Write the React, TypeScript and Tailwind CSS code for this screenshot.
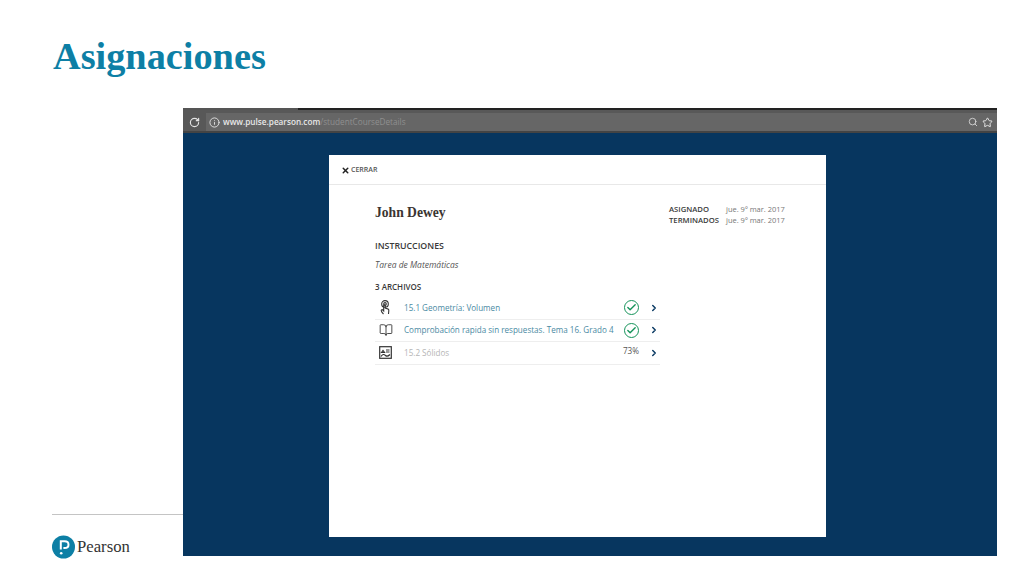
import { ChevronRight, Check, X, RotateCw, Info, Search, Star, BookOpen } from "lucide-react";

const openSans = "font-['Open_Sans',sans-serif]";

function StatusCheck() {
  return (
    <span className="flex h-[15px] w-[15px] items-center justify-center rounded-full border-[1.5px] border-[#15935a]">
      <Check size={11} strokeWidth={3} className="text-[#15935a]" />
    </span>
  );
}

function TouchIcon() {
  return (
    <svg width="12" height="15" viewBox="0 0 12 15" fill="none" stroke="#333" strokeWidth="1.1">
      <circle cx="6" cy="3.900" r="3.300" />
      <circle cx="6" cy="3.900" r="1.300" />
      <path d="M4.500 14c-1-1-2.300-2.400-2.300-3.600 0-.8 1-1 1.600-.4l.9.900V5.600c0-1 1.600-1 1.600 0v2.600l2.400.7c.8.2 1.200.8 1.100 1.600L9.500 14" />
    </svg>
  );
}

function ImageListIcon() {
  return (
    <svg width="13" height="13" viewBox="0 0 13 13" fill="none" stroke="#333" strokeWidth="1.2">
      <rect x="0.700" y="0.700" width="11.600" height="11.600" />
      <path d="M2.500 6.500 4 4.500 5.500 6.500H2.500ZM7 4h3.500M7 6h3.500M2 10.500c1.500-2.500 3-2.500 4.500-1s2.500 1 4.500-1" />
    </svg>
  );
}

function PearsonLogo() {
  return (
    <svg width="23" height="24" viewBox="0 0 23 24">
      <circle cx="11.500" cy="12" r="11.500" fill="#0d7fa5" />
      <path
        d="M8.800 14.500V6.300h3.800c2.400 0 3.900 1.300 3.900 3.400s-1.500 3.400-3.900 3.400h-1.200"
        fill="none"
        stroke="#fff"
        strokeWidth="2"
      />
      <circle cx="9.200" cy="18.300" r="1.300" fill="#fff" />
    </svg>
  );
}

const files = [
  { icon: <TouchIcon />, name: "15.1 Geometría: Volumen", done: true },
  { icon: <BookOpen size={14} strokeWidth={1.5} className="text-[#333]" />, name: "Comprobación rapida sin respuestas. Tema 16. Grado 4", done: true },
  { icon: <ImageListIcon />, name: "15.2 Sólidos", done: false },
];

function FileRow({ file }: { file: (typeof files)[number] }) {
  return (
    <div className="flex h-[22.500px] items-center border-b border-[#eeeeee]">
      <div className="flex w-[29px] justify-start pl-[4px]">{file.icon}</div>
      <div className={`flex-1 whitespace-nowrap text-[8.100px] ${file.done ? "text-[#4a8aa3]" : "text-[#b5b5b5]"}`}>{file.name}</div>
      <div className="flex w-[18px] justify-center">
        {file.done ? <StatusCheck /> : <span className="-mt-[3px] text-[8.200px] text-[#555]">73%</span>}
      </div>
      <div className="flex w-[20px] justify-center pl-[7px]">
        <ChevronRight size={10} strokeWidth={3.500} className="text-[#0a3a63]" />
      </div>
    </div>
  );
}

function Modal() {
  return (
    <div className={`ml-[146px] mt-[22px] h-[382px] w-[497px] bg-white ${openSans}`}>
      <div className="flex h-[30px] items-center gap-[1px] border-b border-[#e8e8e8] pl-[12px] pt-[2px]">
        <X size={9} strokeWidth={4} className="text-[#222]" />
        <span className="text-[7px] font-semibold text-[#555]">CERRAR</span>
      </div>

      <div className="flex items-start pl-[46px] pt-[18px]">
        <div className="w-[285px]">
          <h2 className="font-['Liberation_Serif',serif] text-[13.600px] font-bold leading-[20px] text-[#3b3532]">John Dewey</h2>

          <div className="mt-[16px] text-[8.800px] font-semibold leading-[14px] text-[#3a3a3a]">INSTRUCCIONES</div>
          <div className="mt-[5px] text-[8.500px] italic leading-[14px] text-[#555]">Tarea de Matemáticas</div>
          <div className="mt-[8px] text-[8px] font-semibold leading-[14px] text-[#3a3a3a]">3 ARCHIVOS</div>

          <div className="mt-[3px]">
            {files.map((file) => (
              <FileRow key={file.name} file={file} />
            ))}
          </div>
        </div>

        <div className="ml-[9px] mt-[1px] grid grid-cols-[57px_auto] text-[7.500px] leading-[11px] text-[#777]">
          <span className="text-[7.700px] font-semibold text-[#3a3a3a]">ASIGNADO</span>
          <span>jue. 9º mar. 2017</span>
          <span className="text-[7.700px] font-semibold text-[#3a3a3a]">TERMINADOS</span>
          <span>jue. 9º mar. 2017</span>
        </div>
      </div>
    </div>
  );
}

function BrowserShot() {
  return (
    <div className="h-[448px] w-[814px] bg-[#07365f]">
      <div className="flex h-[2px]">
        <div className="w-[115px] bg-[#555]" />
        <div className="flex-1 bg-[#222]" />
      </div>
      <div className={`flex h-[23px] items-start border-b-2 border-[#444] bg-[#585858] pt-[3px] ${openSans}`}>
        <div className="flex h-[18px] w-[23px] items-center justify-center">
          <RotateCw size={11} strokeWidth={2.500} className="text-[#e5e5e5]" />
        </div>
        <div className="flex h-[18px] flex-1 items-center gap-[3px] bg-[#666] pl-[3px] pr-[4px]">
          <Info size={11} className="text-[#e5e5e5]" />
          <span className="text-[8.200px] font-semibold text-[#e8e8e8]">
            www.pulse.pearson.com<span className="font-normal text-[#8f8f8f]">/studentCourseDetails</span>
          </span>
          <Search size={10} strokeWidth={2} className="ml-auto text-[#ddd]" />
          <Star size={11} strokeWidth={2} className="ml-[1px] text-[#eee]" />
        </div>
      </div>
      <Modal />
    </div>
  );
}

export default function App() {
  return (
    <div className="flex h-[576px] w-[1024px] flex-col overflow-hidden bg-white">
      <h1 className="pl-[53px] pt-[34px] font-['Liberation_Serif',serif] text-[38.300px] font-bold leading-[44px] text-[#0d7fa5]">
        Asignaciones
      </h1>
      <div className="mt-[30px] flex">
        <div className="flex w-[183px] flex-col pl-[52px] pt-[406px]">
          <div className="h-px bg-[#c4c4c4]" />
          <div className="mt-[20px] flex items-center gap-[2px]">
            <PearsonLogo />
            <span className="font-['Liberation_Serif',serif] text-[16.700px] leading-[24px] text-[#333]">Pearson</span>
          </div>
        </div>
        <BrowserShot />
      </div>
    </div>
  );
}
